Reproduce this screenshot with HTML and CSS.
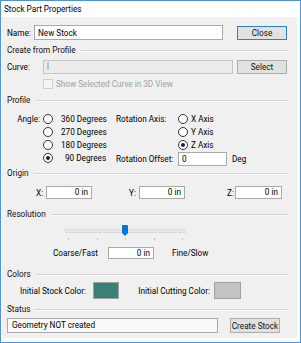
FILE: index.html
```html
<!DOCTYPE html>
<html lang="en">
<head>
  <meta charset="UTF-8" />
  <title>Stock Part Properties</title>
  <link rel="stylesheet" href="styles.css">
</head>
<body>
  <div class="window">
    <div class="titlebar">Stock Part Properties</div>
    <div class="content">

      <div class="row name-row">
        <span class="lbl-name">Name:</span>
        <input class="field name-field" type="text" value="New Stock">
        <button class="btn btn-default">Close</button>
      </div>

      <div class="head">Create from Profile</div>
      <div class="row curve-row">
        <span class="lbl-curve">Curve:</span>
        <div class="field curve-field">|</div>
        <button class="btn">Select</button>
      </div>
      <div class="row check-row">
        <span class="check"></span>
        <span class="disabled">Show Selected Curve in 3D View</span>
      </div>

      <div class="head">Profile</div>
      <div class="profile">
        <div class="prow">
          <span class="cell-a">Angle:</span>
          <span class="radio"></span><span class="cell-deg">360 Degrees</span>
          <span class="cell-rot">Rotation Axis:</span>
          <span class="radio"></span><span class="axis">X Axis</span>
        </div>
        <div class="prow">
          <span class="cell-a"></span>
          <span class="radio"></span><span class="cell-deg">270 Degrees</span>
          <span class="cell-rot"></span>
          <span class="radio"></span><span class="axis">Y Axis</span>
        </div>
        <div class="prow">
          <span class="cell-a"></span>
          <span class="radio"></span><span class="cell-deg">180 Degrees</span>
          <span class="cell-rot"></span>
          <span class="radio on"></span><span class="axis">Z Axis</span>
        </div>
        <div class="prow">
          <span class="cell-a"></span>
          <span class="radio on"></span><span class="cell-deg deg90">90 Degrees</span>
          <span class="offset">
            <span class="cell-rot">Rotation Offset:</span>
            <span class="field offset-field">0</span>
            <span class="deg">Deg</span>
          </span>
        </div>
      </div>

      <div class="head head-origin">Origin</div>
      <div class="row origin-row">
        <span class="lbl-x">X:</span><span class="field num">0 in</span>
        <span class="lbl-y">Y:</span><span class="field num">0 in</span>
        <span class="lbl-z">Z:</span><span class="field num num-z">0 in</span>
      </div>

      <div class="head head-gap">Resolution</div>
      <div class="slider">
        <div class="track"></div>
        <div class="thumb"></div>
        <div class="ticks">
          <i></i><i></i><i></i><i></i><i></i>
        </div>
      </div>
      <div class="row res-row">
        <span class="lbl-coarse">Coarse/Fast</span>
        <span class="field num res-field">0 in</span>
        <span class="lbl-fine">Fine/Slow</span>
      </div>

      <div class="head head-gap">Colors</div>
      <div class="row color-row">
        <span class="lbl-stock">Initial Stock Color:</span>
        <span class="swatch stock"></span>
        <span class="lbl-cut">Initial Cutting Color:</span>
        <span class="swatch cut"></span>
      </div>

      <div class="head head-status">Status</div>
      <div class="row status-row">
        <div class="status-box">Geometry NOT created</div>
        <button class="btn btn-create">Create Stock</button>
      </div>

    </div>
  </div>
</body>
</html>
```

FILE: styles.css
```css
html, body { margin: 0; padding: 0; background: #fff; }
body { font-family: Roboto, "Liberation Sans", sans-serif; font-size: 8.2px; color: #000; white-space: nowrap; }

.window { width: 301px; height: 343px; box-sizing: border-box; border: 1px solid #4c93d9; background: #fff; display: flex; flex-direction: column; }
.titlebar { height: 16px; line-height: 16px; padding-left: 3px; font-size: 8.2px; color: #000; }
.content { flex: 1; background: #f0f0f0; margin: 0 3px 4px 1px; padding: 0 0 0 5px; }

.row { display: flex; align-items: center; }
.field { box-sizing: border-box; background: #fff; border: 1px solid #a9a9a9; font: inherit; color: #000; padding: 0 3px; line-height: 11px; }
.btn { box-sizing: border-box; height: 14px; width: 50px; padding: 0; font: inherit; line-height: 12px; color: #111; background: #e1e1e1; border: 1px solid #adadad; }
.btn-default { border-color: #2f7fd0; }

/* name */
.name-row { margin-top: 8px; height: 15px; }
.lbl-name { width: 27px; }
.name-field { width: 189px; height: 15px; }
.name-row .btn { margin-left: 14px; }

/* group headings with etched line */
.head { display: flex; align-items: center; height: 12px; margin-top: 4px; color: #111; }
.head::after { content: ""; flex: 1; margin: 1px 9px 0 5px; border-top: 1px solid #d3d3d3; border-bottom: 1px solid #fbfbfb; }

.curve-row { margin-top: 4px; height: 14px; }
.lbl-curve { width: 36px; }
.curve-field { width: 190px; height: 14px; background: #ececec; border-color: #c4c4c4; font-weight: 300; }
.curve-row .btn { margin-left: 4px; }

.check-row { margin-top: 5px; height: 10px; }
.check { box-sizing: border-box; width: 10px; height: 10px; margin-left: 36px; margin-right: 3px; border: 1px solid #cfcfcf; background: #f4f4f4; }
.disabled { color: #a2a2a2; }

.check-row + .head { margin-top: 5px; }

/* profile */
.profile { margin-top: 6px; }
.prow { display: flex; align-items: center; height: 13px; }
.cell-a { box-sizing: border-box; width: 36px; padding-right: 3px; text-align: right; }
.radio { box-sizing: border-box; width: 10px; height: 10px; border: 1px solid #333; border-radius: 50%; background: #fff; display: flex; align-items: center; justify-content: center; }
.radio.on::after { content: ""; width: 4px; height: 4px; border-radius: 50%; background: #222; }
.cell-deg { box-sizing: border-box; width: 55px; margin-left: 8px; }
.deg90 { padding-left: 4px; }
.cell-rot { width: 62px; }
.axis { margin-left: 3px; }
.offset { display: flex; align-items: center; margin-top: 3px; }
.offset-field { width: 49px; height: 14px; line-height: 12px; }
.deg { margin-left: 5px; }

.head-origin { margin-top: 3px; }
.origin-row { margin-top: 7px; height: 13px; }
.num { height: 13px; text-align: right; line-height: 11px; }
.lbl-x { width: 10px; margin-left: 29px; }
.origin-row .num { width: 46px; }
.lbl-y { width: 10px; margin-left: 37px; }
.lbl-z { width: 8px; margin-left: 42px; }
.origin-row .num-z { width: 47px; }

.head-gap { margin-top: 9px; }

/* slider */
.slider { position: relative; height: 17px; margin-top: 4px; margin-left: 58px; width: 121px; }
.track { position: absolute; left: 0; right: 0; top: 5px; height: 2px; background: #e7e7e7; border: 1px solid #dadada; }
.thumb { position: absolute; left: 57px; top: 1px; width: 6px; height: 8px; background: #0078d7; border-radius: 1px 1px 0 0; }
.thumb::after { content: ""; position: absolute; left: 0; top: 8px; border-left: 3px solid transparent; border-right: 3px solid transparent; border-top: 3px solid #0078d7; }
.ticks { position: absolute; left: 3px; top: 14px; display: flex; justify-content: space-between; width: 115px; }
.ticks i { width: 1px; height: 2px; background: #c4c4c4; }

.res-row { margin-top: 6px; height: 12px; }
.lbl-coarse { width: 55px; margin-left: 46px; }
.res-field { width: 46px; height: 12px; line-height: 10px; }
.lbl-fine { margin-left: 18px; }

.color-row { margin-top: 2px; height: 17px; }
.lbl-stock { box-sizing: border-box; width: 86px; padding-right: 7px; text-align: right; }
.swatch { box-sizing: border-box; width: 26px; height: 17px; border: 1px solid #a0a0a0; }
.stock { background: #3a7f78; }
.lbl-cut { box-sizing: border-box; width: 95px; padding-right: 4px; text-align: right; }
.cut { background: #c3c3c3; width: 27px; }

.head-status { margin-top: 4px; }
.status-row { margin-top: 3px; height: 15px; }
.status-box { box-sizing: border-box; width: 211px; height: 15px; line-height: 13px; padding-left: 4px; background: #f9f9f9; border: 1px solid #a9a9a9; }
.btn-create { margin-left: 12px; height: 15px; width: 50px; }
```
